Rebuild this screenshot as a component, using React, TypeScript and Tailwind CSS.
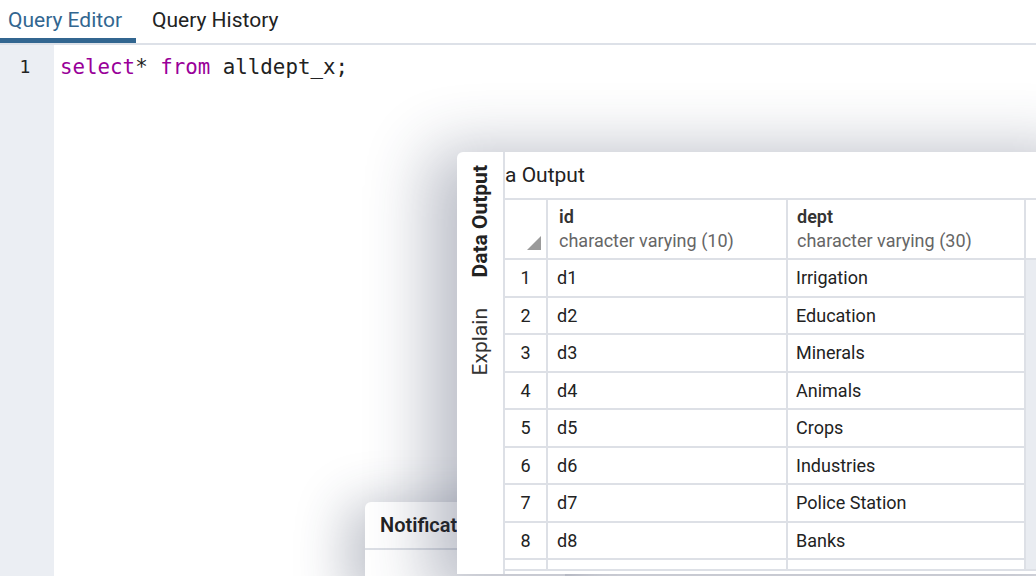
import { Fragment } from 'react'

const rows = [
  ['1', 'd1', 'Irrigation'],
  ['2', 'd2', 'Education'],
  ['3', 'd3', 'Minerals'],
  ['4', 'd4', 'Animals'],
  ['5', 'd5', 'Crops'],
  ['6', 'd6', 'Industries'],
  ['7', 'd7', 'Police Station'],
  ['8', 'd8', 'Banks'],
  ['', '', ''],
]

const cell = 'flex h-[37.5px] items-center border-b-2 border-r-2 border-[#dde0e6] text-[18px] text-[#222]'

function ResultsPanel() {
  return (
    <div className="absolute left-[457px] top-[152px] z-20 flex h-[422px] w-[620px] rounded-tl-md bg-white shadow-[-14px_12px_64px_14px_rgba(40,50,80,0.32)]">
      <div className="flex w-[48px] shrink-0 flex-col items-center border-r-2 border-[#dde0e6] pt-[13px]">
        <div className="rotate-180 font-bold text-[21px] leading-[26px] text-[#222] [writing-mode:vertical-rl]">
          Data Output
        </div>
        <div className="mt-[31px] rotate-180 text-[21px] leading-[26px] text-[#333] [writing-mode:vertical-rl]">
          Explain
        </div>
      </div>
      <div className="flex min-w-0 flex-1 flex-col">
        <div className="flex h-[46px] shrink-0 items-center pt-[1px] text-[21px] text-[#222]">a Output</div>
        <div className="h-[373px] overflow-hidden border-b-2 border-t-2 border-[#dde0e6]">
          <div className="grid grid-cols-[43px_240px_238px_1fr]">
            <div className="relative h-[60px] border-b-2 border-r-2 border-[#dde0e6]">
              <svg className="absolute bottom-[8px] right-[5px]" width="14" height="14" viewBox="0 0 14 14">
                <polygon points="14,0 14,14 0,14" fill="#9a9a9a" />
              </svg>
            </div>
            <div className="flex h-[60px] flex-col justify-center border-b-2 border-r-2 border-[#dde0e6] pl-[11px] text-[18px] leading-[24px]">
              <span className="font-semibold text-[#333]">id</span>
              <span className="text-[#666]">character varying (10)</span>
            </div>
            <div className="flex h-[60px] flex-col justify-center border-b-2 border-r-2 border-[#dde0e6] pl-[9px] text-[18px] leading-[24px]">
              <span className="font-semibold text-[#333]">dept</span>
              <span className="text-[#666]">character varying (30)</span>
            </div>
            <div className="h-[60px] border-b-2 border-[#dde0e6]" />
            {rows.map(([n, id, dept], i) => (
              <Fragment key={i}>
                <div className={`${cell} justify-center`}>{n}</div>
                <div className={`${cell} pl-[9px]`}>{id}</div>
                <div className={`${cell} pl-[8px]`}>{dept}</div>
                <div className="h-[37.5px] bg-[#e9ecf1]" />
              </Fragment>
            ))}
          </div>
        </div>
      </div>
    </div>
  )
}

function NotificationPanel() {
  return (
    <div className="absolute left-[365px] top-[502px] z-10 h-[80px] w-[200px] rounded-tl-md bg-white shadow-[-10px_10px_50px_10px_rgba(40,50,80,0.28)]">
      <div className="flex h-[48px] items-center border-b-2 border-[#dde0e6] pl-[15px] text-[20px] font-semibold text-[#222]">
        Notifications
      </div>
    </div>
  )
}

export default function App() {
  return (
    <div className="relative flex h-[576px] w-[1036px] flex-col overflow-hidden bg-white font-['Roboto',sans-serif]">
      <div className="flex h-[45px] shrink-0 items-stretch border-b-2 border-[#dde1e8]">
        <div className="flex w-[136px] items-center border-b-[5px] border-[#326690] pl-[8px] pt-[3px] text-[21px] text-[#326690]">
          Query Editor
        </div>
        <div className="flex items-center pl-[16px] pt-[3px] pb-[5px] text-[21px] text-[#222]">Query History</div>
      </div>
      <div className="flex flex-1">
        <div className="w-[54px] shrink-0 bg-[#ebeef3] pt-[8px] pr-[4px] text-center font-['DejaVu_Sans_Mono',monospace] text-[18px] leading-[28px] text-[#222]">
          1
        </div>
        <div className="flex-1 pl-[6px] pt-[8px] font-['DejaVu_Sans_Mono',monospace] text-[20.8px] leading-[28px] text-[#222]">
          <span className="text-[#909]">select</span>* <span className="text-[#909]">from</span> alldept_x;
        </div>
      </div>
      <NotificationPanel />
      <ResultsPanel />
    </div>
  )
}
